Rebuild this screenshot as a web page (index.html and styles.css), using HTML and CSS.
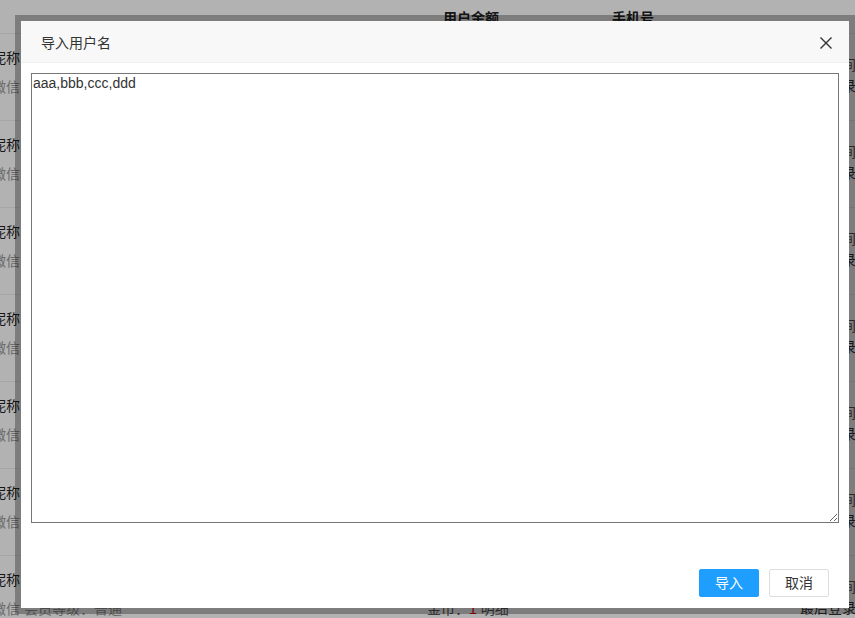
FILE: index.html
```html
<!DOCTYPE html>
<html lang="zh">
<head>
<meta charset="utf-8">
<title>导入用户名</title>
<link rel="stylesheet" href="styles.css">
</head>
<body>
<div class="page">
  <div class="thead">
    <div class="th th-balance">用户余额</div>
    <div class="th th-phone">手机号</div>
  </div>
  <div class="row">
    <div class="cell c1"><div class="name">昵称</div><div class="sub">微信 会员等级：普通</div></div>
    <div class="cell c2"><div class="l1">&nbsp;</div><div class="l2">金币：<span class="red">1</span> 明细</div></div>
    <div class="cell c3"><div class="l1">注册时间</div><div class="l2">最后登录</div></div>
  </div>
  <div class="row">
    <div class="cell c1"><div class="name">昵称</div><div class="sub">微信 会员等级：普通</div></div>
    <div class="cell c2"><div class="l1">&nbsp;</div><div class="l2">金币：<span class="red">1</span> 明细</div></div>
    <div class="cell c3"><div class="l1">注册时间</div><div class="l2">最后登录</div></div>
  </div>
  <div class="row">
    <div class="cell c1"><div class="name">昵称</div><div class="sub">微信 会员等级：普通</div></div>
    <div class="cell c2"><div class="l1">&nbsp;</div><div class="l2">金币：<span class="red">1</span> 明细</div></div>
    <div class="cell c3"><div class="l1">注册时间</div><div class="l2">最后登录</div></div>
  </div>
  <div class="row">
    <div class="cell c1"><div class="name">昵称</div><div class="sub">微信 会员等级：普通</div></div>
    <div class="cell c2"><div class="l1">&nbsp;</div><div class="l2">金币：<span class="red">1</span> 明细</div></div>
    <div class="cell c3"><div class="l1">注册时间</div><div class="l2">最后登录</div></div>
  </div>
  <div class="row">
    <div class="cell c1"><div class="name">昵称</div><div class="sub">微信 会员等级：普通</div></div>
    <div class="cell c2"><div class="l1">&nbsp;</div><div class="l2">金币：<span class="red">1</span> 明细</div></div>
    <div class="cell c3"><div class="l1">注册时间</div><div class="l2">最后登录</div></div>
  </div>
  <div class="row">
    <div class="cell c1"><div class="name">昵称</div><div class="sub">微信 会员等级：普通</div></div>
    <div class="cell c2"><div class="l1">&nbsp;</div><div class="l2">金币：<span class="red">1</span> 明细</div></div>
    <div class="cell c3"><div class="l1">注册时间</div><div class="l2">最后登录</div></div>
  </div>
  <div class="row">
    <div class="cell c1"><div class="name">昵称</div><div class="sub">微信 会员等级：普通</div></div>
    <div class="cell c2"><div class="l1">&nbsp;</div><div class="l2">金币：<span class="red">1</span> 明细</div></div>
    <div class="cell c3"><div class="l1">注册时间</div><div class="l2">最后登录</div></div>
  </div>
</div>

<div class="shade"></div>

<div class="layer">
  <div class="layer-inner">
    <div class="layer-title">
      <span>导入用户名</span>
      <button class="layer-close" aria-label="关闭">
        <svg width="12" height="12" viewBox="0 0 12 12"><path d="M0.5 0.5 L11.5 11.5 M11.5 0.5 L0.5 11.5" stroke="#333" stroke-width="1.4" fill="none"/></svg>
      </button>
    </div>
    <div class="layer-content">
      <textarea class="names">aaa,bbb,ccc,ddd</textarea>
    </div>
    <div class="layer-btns">
      <a class="btn btn-primary">导入</a>
      <a class="btn">取消</a>
    </div>
  </div>
</div>
</body>
</html>
```

FILE: styles.css
```css
* { box-sizing: border-box; }
html, body {
  margin: 0;
  padding: 0;
  width: 855px;
  height: 618px;
  overflow: hidden;
  background: #fff;
  font-family: "Liberation Sans", "Noto Sans CJK SC", sans-serif;
  font-size: 14px;
  color: #333;
}

.page {
  width: 855px;
  overflow: hidden;
}
.thead {
  height: 33px;
  display: flex;
  align-items: center;
  font-weight: bold;
  color: #222;
}
.th-balance { margin-left: 443px; width: 169px; }
.th-phone { width: 100px; }

.row {
  height: 87px;
  border-top: 1px solid #eee;
  display: flex;
}
.cell { flex: none; white-space: nowrap; }
.c1 { margin-left: -8px; width: 435px; padding-top: 14px; }
.c1 .name { height: 20px; line-height: 20px; color: #222; }
.c1 .sub { margin-top: 9px; line-height: 20px; color: #999; }
.c2 { width: 373px; padding-top: 14px; }
.c2 .l1, .c2 .l2 { line-height: 20px; }
.c2 .l2 { margin-top: 9px; color: #555; }
.red { color: #e00; }
.c3 { width: 100px; padding-top: 21px; }
.c3 .l1 { line-height: 20px; color: #555; }
.c3 .l2 { line-height: 20px; margin-top: 1px; color: #333; }

.shade {
  position: fixed;
  inset: 0;
  background: rgba(0, 0, 0, 0.3);
}

.layer {
  position: fixed;
  left: 15px;
  top: 15px;
  width: 840px;
  height: 599px;
  border: 6px solid rgba(0, 0, 0, 0.3);
  background: transparent;
}
.layer-inner {
  width: 100%;
  height: 100%;
  background: #fff;
  display: flex;
  flex-direction: column;
}
.layer-title {
  height: 42px;
  border-bottom: 1px solid #eee;
  background: #f8f8f8;
  padding: 0 17px 0 20px;
  display: flex;
  align-items: center;
  justify-content: space-between;
  color: #333;
  font-size: 14px;
}
.layer-close {
  border: 0;
  background: none;
  padding: 0;
  width: 12px;
  height: 12px;
  display: block;
  margin-top: 2px;
}
.layer-close svg { display: block; }

.layer-content {
  padding: 10px 10px 0;
}
.names {
  display: block;
  width: 808px;
  height: 450px;
  margin: 0;
  border: 1px solid #767676;
  padding: 1px;
  font-family: "Liberation Sans", "Noto Sans CJK SC", sans-serif;
  font-size: 14px;
  color: #333;
  resize: both;
  outline: none;
}

.layer-btns {
  margin-top: auto;
  padding: 0 15px 11px;
  display: flex;
  justify-content: flex-end;
}
.btn {
  display: block;
  height: 28px;
  line-height: 26px;
  margin: 0 5px;
  padding: 0 15px;
  border: 1px solid #dedede;
  border-radius: 2px;
  background: #fff;
  color: #333;
  font-size: 14px;
}
.btn-primary {
  border-color: #1e9fff;
  background: #1e9fff;
  color: #fff;
}
```
